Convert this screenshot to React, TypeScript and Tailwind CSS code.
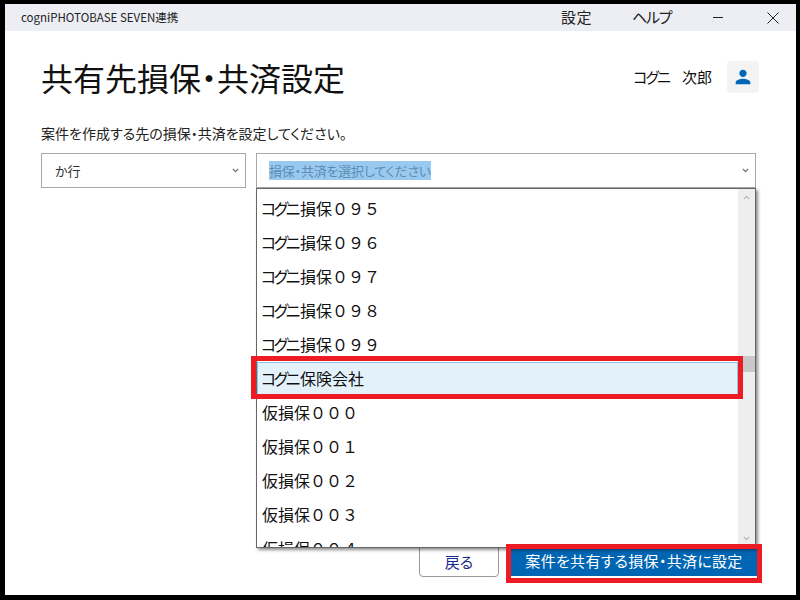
import React from "react";
import { MdPerson } from "react-icons/md";

const items: [string, string, string][] = [
  ["コグニ", "損保", "０９５"],
  ["コグニ", "損保", "０９６"],
  ["コグニ", "損保", "０９７"],
  ["コグニ", "損保", "０９８"],
  ["コグニ", "損保", "０９９"],
  ["コグニ", "保険会社", ""],
  ["", "仮損保", "０００"],
  ["", "仮損保", "００１"],
  ["", "仮損保", "００２"],
  ["", "仮損保", "００３"],
  ["", "仮損保", "００４"],
];

const font = { fontFamily: '"Noto Sans CJK JP", "Liberation Sans", sans-serif' };

function Chevron({ className }: { className: string }) {
  return (
    <svg className={className} width="7" height="5" viewBox="0 0 9 6" fill="none">
      <path d="M1 1l3.5 3.5L8 1" stroke="currentColor" strokeWidth="1.4" />
    </svg>
  );
}

export default function App() {
  return (
    <div className="h-[600px] w-[800px] bg-black pt-1 pl-[5px] pr-1 pb-[5px] [font-feature-settings:'palt']" style={font}>
      <div className="relative flex h-full flex-col bg-white text-[#111]">
        {/* title bar */}
        <div className="flex h-[27px] items-center bg-[#eceef3] pl-4">
          <span className="text-[11.5px] text-[#222]">cogniPHOTOBASE SEVEN連携</span>
          <div className="ml-auto flex items-center text-[#222]">
            <span className="w-[71px] text-[15px] tracking-[0.5px]">設定</span>
            <span className="w-[81px] text-[15px] tracking-[-1.3px]">ヘルプ</span>
            <span className="mb-[1px] h-px w-[10px] bg-[#222]" />
            <svg className="mr-[17px] ml-[44px]" width="12" height="12" viewBox="0 0 12 12" fill="none">
              <path d="M0.5 0.5l11 11M11.5 0.5l-11 11" stroke="#222" strokeWidth="1" />
            </svg>
          </div>
        </div>

        <div className="flex flex-1 flex-col pt-[30px] pr-[37px] pl-9">
          {/* header */}
          <div className="flex h-8 items-center justify-between">
            <h1 className="text-[32px] font-normal leading-none">共有先損保・共済設定</h1>
            <div className="flex items-center">
              <span className="text-[15px] tracking-[-2px]">コグニ</span>
              <span className="mr-[15px] ml-[13px] text-[15px]">次郎</span>
              <div className="flex h-8 w-8 items-center justify-center rounded bg-[#f3f3f3]">
                <MdPerson className="text-[#0067b8]" size={22} />
              </div>
            </div>
          </div>

          <p className="mt-[30px] text-[14px] leading-[20px] text-[#222]">
            案件を作成する先の損保・共済を設定してください。
          </p>

          {/* selects */}
          <div className="mt-[10px] flex gap-[10px] pr-[3px]">
            <div className="flex h-[35px] w-[205px] items-center justify-between border border-[#a8a8a8] pr-[6px] pl-[13px] text-[13px] text-[#333]">
              か行
              <Chevron className="text-[#666]" />
            </div>
            <div className="flex h-[35px] flex-1 items-center justify-between border border-[#a8a8a8] pr-[6px] pl-3 text-[13px]">
              <span className="bg-[#99c9ef] tracking-[-0.2px] text-[#5d8db3]">損保・共済を選択してください</span>
              <Chevron className="text-[#666]" />
            </div>
          </div>

          {/* footer buttons */}
          <div className="mt-auto mb-[18px] flex justify-end gap-[12px] pr-[2px]">
            <button className="h-[30px] w-[80px] rounded-b border border-[#999] text-[15px] text-[#1a2a8a]">戻る</button>
            <button className="h-[29px] w-[246px] bg-[#0065b3] text-[15px] tracking-[0.3px] text-white">
              案件を共有する損保・共済に設定
            </button>
          </div>
        </div>

        {/* dropdown list */}
        <div className="absolute top-[184px] left-[251px] flex h-[360px] w-[500px] border border-[#666] bg-white shadow-[2px_2px_3px_rgba(0,0,0,0.45)]">
          <div className="h-full flex-1 overflow-hidden pt-[3px]">
            {items.map(([kana, name, num]) => (
              <div
                key={name + num}
                className={
                  name === "保険会社"
                    ? "flex h-[34px] items-center border border-[#8cc4e4] bg-[#e3f2fa] pb-[2px] pl-[3px] text-[16px] text-[#111]"
                    : kana
                      ? "flex h-[34px] items-center pb-[2px] pl-1 text-[16px] text-[#111]"
                      : "flex h-[34px] items-center pb-[2px] pl-[5px] text-[16px] text-[#111]"
                }
              >
                <span className="tracking-[-2.5px]">{kana}</span>
                <span className={kana ? "ml-[2px]" : ""}>{name}</span>
                <span className="[font-feature-settings:normal]">{num}</span>
              </div>
            ))}
          </div>
          <div className="flex w-[17px] flex-col items-center bg-[#eeeeee]">
            <Chevron className="mt-[6px] rotate-180 text-[#b5b5b5]" />
            <div className="mt-[156px] h-4 w-full bg-[#c8c8c8]" />
            <Chevron className="mt-auto mb-[6px] text-[#b5b5b5]" />
          </div>
        </div>

        {/* red annotation boxes */}
        <div className="absolute top-[352px] left-[246px] h-[43px] w-[492px] border-[5px] border-[#ed1c24]" />
        <div className="absolute top-[540px] left-[501px] h-[39px] w-[256px] border-[5px] border-[#ed1c24]" />
      </div>
    </div>
  );
}
